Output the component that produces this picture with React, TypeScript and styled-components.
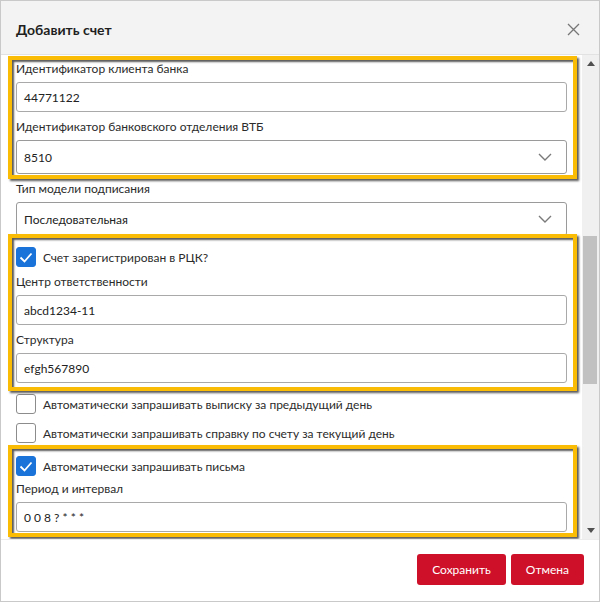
import React from "react";
import styled, { createGlobalStyle } from "styled-components";

const Global = createGlobalStyle`
  html, body { margin: 0; padding: 0; background: #ffffff; }
  * { box-sizing: border-box; }
  body { font-family: Lato, "Open Sans", "Liberation Sans", sans-serif; }
`;

const Dialog = styled.div`
  width: 600px;
  height: 602px;
  border: 1px solid #c9c9c9;
  display: flex;
  flex-direction: column;
  background: #fff;
  overflow: hidden;
`;

const Header = styled.div`
  height: 54px;
  flex: none;
  background: #f3f3f3;
  border-bottom: 1px solid #e2e2e2;
  display: flex;
  align-items: center;
  justify-content: space-between;
  padding: 0 18px 0 15px;
`;

const Title = styled.div`
  font-size: 14px;
  font-weight: 700;
  color: #1f1f1f;
  padding-top: 4px;
`;

const CloseButton = styled.button`
  width: 16px;
  height: 16px;
  padding: 0;
  border: none;
  background: none;
  display: flex;
  align-items: center;
  justify-content: center;
  margin-top: 4px;
`;

const Body = styled.div`
  flex: 1;
  display: flex;
  min-height: 0;
`;

const Content = styled.div`
  flex: 1;
  overflow: hidden;
  padding: 4px 15px 0 15px;
  display: flex;
  flex-direction: column;
`;

const ScrollBar = styled.div`
  width: 17px;
  flex: none;
  background: #f0f0f0;
  display: flex;
  flex-direction: column;
`;

const ScrollArrow = styled.div`
  height: 17px;
  flex: none;
  display: flex;
  align-items: center;
  justify-content: center;
`;

const Track = styled.div`
  flex: 1;
  display: flex;
  flex-direction: column;
  padding: 0 2px 0 1px;
`;

const Thumb = styled.div<{ $offset: number; $size: number }>`
  margin-top: ${(p) => p.$offset}px;
  height: ${(p) => p.$size}px;
  background: #c1c1c1;
`;

const Group = styled.div<{ $top: number; $bottom: number }>`
  position: relative;
  display: flex;
  flex-direction: column;
  &::after {
    content: "";
    position: absolute;
    left: -8px;
    right: -10px;
    top: ${(p) => -p.$top}px;
    bottom: ${(p) => -p.$bottom}px;
    border: 4px solid #fbbc05;
    box-shadow: 2px 2px 2px rgba(0, 0, 0, 0.65), inset 2px 2px 2px rgba(0, 0, 0, 0.65);
    pointer-events: none;
  }
`;

const Label = styled.div<{ $space?: number }>`
  height: 20px;
  line-height: 20px;
  margin-top: ${(p) => p.$space ?? 5}px;
  margin-bottom: 3px;
  font-size: 12px;
  color: #2b2b2b;
  white-space: nowrap;
`;

const Input = styled.div`
  height: 30px;
  border: 1px solid #a9a9a9;
  border-radius: 3px;
  display: flex;
  align-items: center;
  padding-left: 7px;
  font-size: 12px;
  color: #222;
  background: #fff;
`;

const Select = styled(Input)`
  height: 34px;
  justify-content: space-between;
  padding-right: 14px;
  border-color: #9a9a9a;
`;

const CheckRow = styled.label<{ $space: number }>`
  height: 24px;
  margin-top: ${(p) => p.$space}px;
  display: flex;
  align-items: center;
  gap: 7px;
  font-size: 12px;
  color: #2b2b2b;
  white-space: nowrap;
`;

const Box = styled.span<{ $checked?: boolean }>`
  width: 20px;
  height: 20px;
  flex: none;
  border-radius: 3px;
  border: 1px solid ${(p) => (p.$checked ? "#1a73d9" : "#8c8c8c")};
  background: ${(p) => (p.$checked ? "#1a73d9" : "#fff")};
  display: flex;
  align-items: center;
  justify-content: center;
`;

const Footer = styled.div`
  height: 62px;
  flex: none;
  border-top: 1px solid #ececec;
  display: flex;
  justify-content: flex-end;
  align-items: center;
  gap: 5px;
  padding: 0 15px 2px 0;
`;

const Button = styled.button`
  height: 31px;
  padding: 0 15px;
  border: none;
  border-radius: 3px;
  background: #cf1029;
  color: #fff;
  font-family: inherit;
  font-size: 12px;
`;

const Chevron = () => (
  <svg width="14" height="8" viewBox="0 0 14 8" fill="none">
    <path d="M1 1l6 6 6-6" stroke="#7a7a7a" strokeWidth="1.4" />
  </svg>
);

const Check = () => (
  <svg width="14" height="11" viewBox="0 0 14 11" fill="none">
    <path d="M1.5 5.5l4 4 7-8" stroke="#fff" strokeWidth="1.8" />
  </svg>
);

const Field = ({ label, value, space }: { label: string; value: string; space?: number }) => (
  <>
    <Label $space={space}>{label}</Label>
    <Input>{value}</Input>
  </>
);

const SelectField = ({ label, value }: { label: string; value: string }) => (
  <>
    <Label>{label}</Label>
    <Select>
      <span>{value}</span>
      <Chevron />
    </Select>
  </>
);

const Checkbox = ({ label, checked, space }: { label: string; checked?: boolean; space: number }) => (
  <CheckRow $space={space}>
    <Box $checked={checked}>{checked && <Check />}</Box>
    {label}
  </CheckRow>
);

export default function App() {
  return (
    <>
      <Global />
      <Dialog>
        <Header>
          <Title>Добавить счет</Title>
          <CloseButton aria-label="close">
            <svg width="13" height="13" viewBox="0 0 13 13">
              <path d="M1 1l11 11M12 1L1 12" stroke="#777" strokeWidth="1.3" />
            </svg>
          </CloseButton>
        </Header>
        <Body>
          <Content>
            <Group $top={3} $bottom={5}>
              <Field space={0} label="Идентификатор клиента банка" value="44771122" />
              <SelectField label="Идентификатор банковского отделения ВТБ" value="8510" />
            </Group>
            <SelectField label="Тип модели подписания" value="Последовательная" />
            <Group $top={2} $bottom={8}>
              <Checkbox space={9} checked label="Счет зарегистрирован в РЦК?" />
              <Field space={3} label="Центр ответственности" value="abcd1234-11" />
              <Field label="Структура" value="efgh567890" />
            </Group>
            <Checkbox space={9} label="Автоматически запрашивать выписку за предыдущий день" />
            <Checkbox space={5} label="Автоматически запрашивать справку по счету за текущий день" />
            <Group $top={0} $bottom={5}>
              <Checkbox space={9} checked label="Автоматически запрашивать письма" />
              <Field space={1} label="Период и интервал" value="0 0 8 ? * * *" />
            </Group>
          </Content>
          <ScrollBar>
            <ScrollArrow>
              <svg width="8" height="5" viewBox="0 0 8 5">
                <path d="M0 5L4 0L8 5z" fill="#505050" />
              </svg>
            </ScrollArrow>
            <Track>
              <Thumb $offset={164} $size={148} />
            </Track>
            <ScrollArrow>
              <svg width="8" height="5" viewBox="0 0 8 5">
                <path d="M0 0L4 5L8 0z" fill="#505050" />
              </svg>
            </ScrollArrow>
          </ScrollBar>
        </Body>
        <Footer>
          <Button>Сохранить</Button>
          <Button>Отмена</Button>
        </Footer>
      </Dialog>
    </>
  );
}
